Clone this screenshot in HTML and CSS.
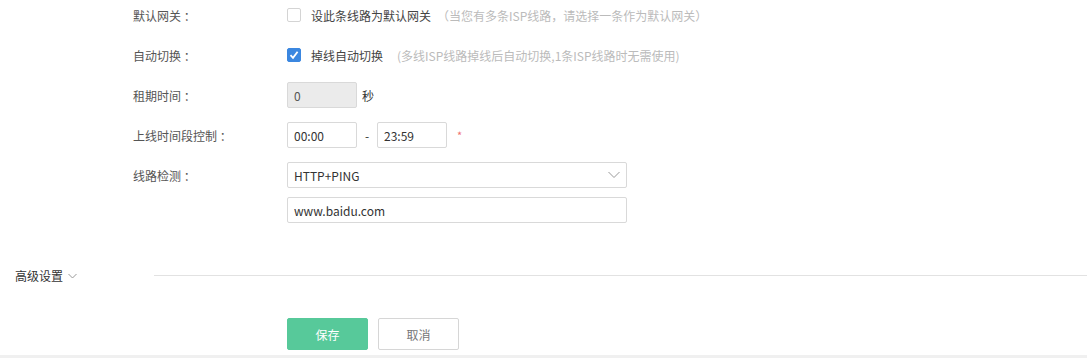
FILE: index.html
```html
<!DOCTYPE html>
<html lang="zh-CN">
<head>
  <meta charset="UTF-8" />
  <title>线路设置</title>
  <link rel="stylesheet" href="styles.css">
</head>
<body>
  <div class="page">
    <!-- Basic settings -->
    <div class="form">
      <div class="row">
        <label class="row-label">默认网关 ：</label>
        <div class="row-field">
          <span class="checkbox"></span>
          <span class="check-text">设此条线路为默认网关</span>
          <span class="hint">（当您有多条ISP线路，请选择一条作为默认网关）</span>
        </div>
      </div>
      <div class="row">
        <label class="row-label">自动切换 ：</label>
        <div class="row-field">
          <span class="checkbox checked">
            <svg width="10" height="10" viewBox="0 0 10 10"><path d="M1.5 5.2 L4 7.8 L8.6 1.8" fill="none" stroke="#fff" stroke-width="1.8"/></svg>
          </span>
          <span class="check-text">掉线自动切换</span>
          <span class="hint hint-narrow">(多线ISP线路掉线后自动切换,1条ISP线路时无需使用)</span>
        </div>
      </div>
      <div class="row">
        <label class="row-label">租期时间 ：</label>
        <div class="row-field">
          <input class="text-input short disabled" type="text" value="0" disabled>
          <span class="unit">秒</span>
        </div>
      </div>
      <div class="row">
        <label class="row-label">上线时间段控制 ：</label>
        <div class="row-field">
          <input class="text-input short" type="text" value="00:00">
          <span class="dash">-</span>
          <input class="text-input short" type="text" value="23:59">
          <span class="required">*</span>
        </div>
      </div>
      <div class="row">
        <label class="row-label">线路检测 ：</label>
        <div class="row-field">
          <div class="select">
            <span>HTTP+PING</span>
            <svg width="12" height="8" viewBox="0 0 12 8"><path d="M0.5 1 L6 6.5 L11.5 1" fill="none" stroke="#999" stroke-width="1"/></svg>
          </div>
        </div>
      </div>
      <div class="row row-tight">
        <label class="row-label"></label>
        <div class="row-field">
          <input class="text-input wide" type="text" value="www.baidu.com">
        </div>
      </div>
    </div>

    <!-- Advanced settings -->
    <div class="advanced">
      <span class="advanced-title">高级设置</span>
      <svg class="advanced-arrow" width="9" height="6" viewBox="0 0 9 6"><path d="M0.5 1 L4.5 5 L8.5 1" fill="none" stroke="#999" stroke-width="1"/></svg>
      <div class="advanced-line"></div>
    </div>

    <!-- Actions -->
    <div class="actions">
      <button class="btn btn-primary">保存</button>
      <button class="btn btn-default">取消</button>
    </div>
  </div>
  <div class="footer-band"></div>
</body>
</html>
```

FILE: styles.css
```css
/* Global Styles */
body {
  margin: 0;
  font-family: "Noto Sans CJK SC", "Noto Sans", sans-serif;
  font-size: 12px;
  color: #333;
  background-color: #fff;
}
.page {
  height: 355px;
  display: flex;
  flex-direction: column;
}
/* Form rows */
.form {
  padding: 2px 0 0 133px;
}
.row {
  display: flex;
  align-items: center;
  height: 26px;
  margin-bottom: 14px;
}
.row-tight {
  margin-top: -5px;
}
.row-label {
  width: 154px;
  color: #555;
}
.row-field {
  display: flex;
  align-items: center;
}
/* Checkbox */
.checkbox {
  width: 12px;
  height: 12px;
  border: 1px solid #d4d4d4;
  border-radius: 2px;
  display: flex;
  align-items: center;
  justify-content: center;
  margin-right: 10px;
}
.checkbox.checked {
  background-color: #3b87e0;
  border-color: #3b87e0;
}
.check-text {
  color: #444;
}
.hint {
  color: #bbb;
  margin-left: 6px;
}
.hint-narrow {
  margin-left: 14px;
}
/* Inputs */
.text-input {
  box-sizing: border-box;
  height: 26px;
  border: 1px solid #d9d9d9;
  border-radius: 2px;
  padding: 0 6px;
  font-family: inherit;
  font-size: 12px;
  color: #333;
  outline: none;
}
.text-input.short {
  width: 70px;
}
.text-input.wide {
  width: 340px;
}
.text-input.disabled {
  background-color: #ebebeb;
  color: #555;
}
.unit {
  margin-left: 5px;
}
.dash {
  width: 20px;
  text-align: center;
}
.required {
  color: #f07070;
  margin-left: 10px;
  font-size: 11px;
}
.select {
  box-sizing: border-box;
  width: 340px;
  height: 26px;
  border: 1px solid #d9d9d9;
  border-radius: 2px;
  padding: 0 6px;
  display: flex;
  align-items: center;
  justify-content: space-between;
  color: #333;
}
/* Advanced settings */
.advanced {
  display: flex;
  align-items: center;
  margin-top: 30px;
  padding-left: 15px;
}
.advanced-title {
  color: #333;
}
.advanced-arrow {
  margin-left: 5px;
}
.advanced-line {
  flex: 1;
  height: 1px;
  background-color: #e2e2e2;
  margin-left: 77px;
}
/* Actions */
.actions {
  display: flex;
  gap: 10px;
  padding-left: 287px;
  margin-top: 34px;
}
.btn {
  width: 81px;
  height: 32px;
  border-radius: 2px;
  font-family: inherit;
  font-size: 12px;
  cursor: pointer;
}
.btn-primary {
  background-color: #57c99a;
  border: 1px solid #57c99a;
  color: #fff;
}
.btn-default {
  background-color: #fff;
  border: 1px solid #d6d6d6;
  color: #777;
}
.footer-band {
  height: 3px;
  background-color: #f0f0f0;
}
```
